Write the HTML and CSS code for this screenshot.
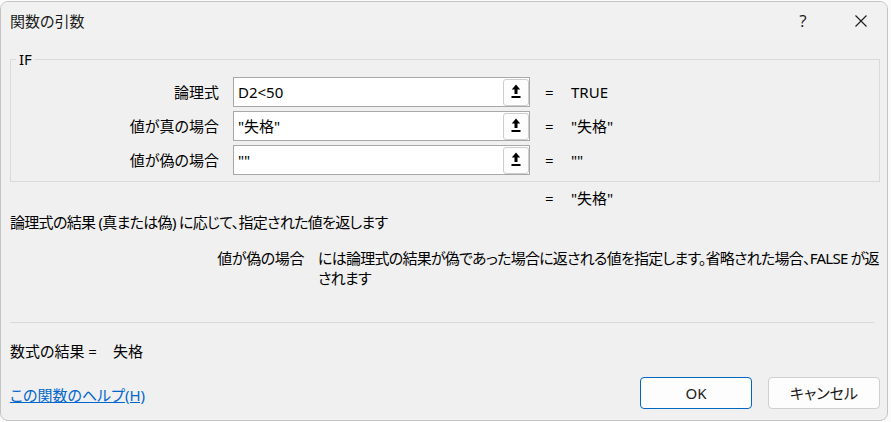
FILE: index.html
```html
<!DOCTYPE html>
<html lang="ja">
<head>
<meta charset="utf-8">
<title>関数の引数</title>
<link rel="stylesheet" href="styles.css">
</head>
<body>
<div class="dialog">
  <div class="titlebar">
    <div class="title">関数の引数</div>
    <div class="cap cap-help">?</div>
    <div class="cap cap-close">
      <svg width="12" height="12" viewBox="0 0 12 12"><path d="M0.5 0.5 L11.5 11.5 M11.5 0.5 L0.5 11.5" stroke="#1b1b1b" stroke-width="1.1" fill="none"/></svg>
    </div>
  </div>
  <div class="content">
    <fieldset class="group">
      <legend class="legend">IF</legend>
      <div class="args">
        <div class="arg-label">論理式</div>
        <div class="field"><span class="field-text">D2&lt;50</span><span class="pick"><svg width="10" height="16" viewBox="0 0 10 16"><path d="M5 0.5 L9.2 5.5 L0.8 5.5 Z" fill="#000"/><rect x="3.5" y="5" width="3" height="5" fill="#000"/><rect x="0.5" y="12" width="9" height="2" fill="#000"/></svg></span></div>
        <div class="eq">=</div>
        <div class="val">TRUE</div>

        <div class="arg-label">値が真の場合</div>
        <div class="field"><span class="field-text">"失格"</span><span class="pick"><svg width="10" height="16" viewBox="0 0 10 16"><path d="M5 0.5 L9.2 5.5 L0.8 5.5 Z" fill="#000"/><rect x="3.5" y="5" width="3" height="5" fill="#000"/><rect x="0.5" y="12" width="9" height="2" fill="#000"/></svg></span></div>
        <div class="eq">=</div>
        <div class="val">"失格"</div>

        <div class="arg-label">値が偽の場合</div>
        <div class="field"><span class="field-text">""</span><span class="pick"><svg width="10" height="16" viewBox="0 0 10 16"><path d="M5 0.5 L9.2 5.5 L0.8 5.5 Z" fill="#000"/><rect x="3.5" y="5" width="3" height="5" fill="#000"/><rect x="0.5" y="12" width="9" height="2" fill="#000"/></svg></span></div>
        <div class="eq">=</div>
        <div class="val">""</div>
      </div>
    </fieldset>

    <div class="result-row"><span class="eq-plain">=</span><span class="val">"失格"</span></div>

    <div class="summary">論理式の結果 (真または偽) に応じて、指定された値を返します</div>

    <div class="detail">
      <div class="detail-label">値が偽の場合</div>
      <div class="detail-text">には論理式の結果が偽であった場合に返される値を指定します。省略された場合、FALSE が返<br>されます</div>
    </div>

    <div class="sep"></div>

    <div class="formula">数式の結果 =<span class="formula-val">失格</span></div>

    <div class="footer">
      <a class="help-link" href="#">この関数のヘルプ(H)</a>
      <div class="buttons">
        <div class="btn btn-primary">OK</div>
        <div class="btn">キャンセル</div>
      </div>
    </div>
  </div>
</div>
</body>
</html>
```

FILE: styles.css
```css
html, body {
  margin: 0;
  padding: 0;
  background: #fbfbfb;
}

body {
  font-family: "Noto Sans", "Noto Sans CJK JP", sans-serif;
  font-size: 15px;
  font-feature-settings: "palt";
  color: #000;
  line-height: 20px;
}

.dialog {
  box-sizing: border-box;
  width: 888px;
  height: 420px;
  margin-top: 1px;
  background: #f0f0f0;
  border: 1px solid #c4c4c4;
  border-radius: 8px;
  overflow: hidden;
}

.titlebar {
  display: flex;
  align-items: center;
  height: 37px;
  background: #f1f1f1;
}

.title {
  flex: 1;
  padding-left: 9px;
  color: #1a1a1a;
}

.cap {
  display: flex;
  align-items: center;
  justify-content: center;
  height: 37px;
}

.cap-help {
  width: 64px;
  color: #1a1a1a;
  font-size: 17px;
  font-family: "Segoe UI", "Open Sans", sans-serif;
}

.cap-close {
  width: 52px;
}

.content {
  padding: 0 7px 0 9px;
}

.group {
  margin: 10px 0 0 0;
  padding: 0;
  border: 1px solid #dadada;
  min-width: 0;
}

.legend {
  margin-left: 5px;
  padding: 0 3px;
  line-height: 20px;
}

.args {
  display: grid;
  grid-template-columns: 222px 297px 41px 1fr;
  row-gap: 4px;
  padding: 8px 0 6px 0;
  align-items: center;
}

.arg-label {
  text-align: right;
  padding-right: 14px;
}

.field {
  box-sizing: border-box;
  height: 30px;
  display: flex;
  align-items: center;
  background: #fff;
  border: 1px solid #a8a8a8;
}

.field-text {
  flex: 1;
  padding-left: 4px;
}

.pick {
  box-sizing: border-box;
  width: 26px;
  height: 27px;
  border: 1px solid #cdcdcd;
  border-radius: 3px;
  background: #fdfdfd;
  display: flex;
  align-items: center;
  justify-content: center;
}

.pick svg {
  display: block;
}

.eq {
  padding-left: 15px;
}

.result-row {
  display: flex;
  margin-top: 6px;
  padding-left: 535px;
}

.eq-plain {
  width: 26px;
}

.summary {
  margin-top: 4px;
  letter-spacing: -0.7px;
}

.detail {
  display: grid;
  grid-template-columns: 294px 1fr;
  column-gap: 14px;
  margin-top: 16px;
}

.detail-label {
  text-align: right;
  letter-spacing: -0.4px;
}

.detail-text {
  letter-spacing: -0.75px;
  white-space: nowrap;
}

.sep {
  margin-top: 34px;
  height: 1px;
  background: #d9d9d9;
  margin-right: 6px;
}

.formula {
  margin-top: 18px;
}

.formula-val {
  margin-left: 16px;
}

.footer {
  display: flex;
  align-items: center;
  justify-content: space-between;
  margin-top: 16px;
}

.help-link {
  color: #0066cc;
  text-decoration: underline;
  margin-top: 3px;
}

.buttons {
  display: flex;
  gap: 16px;
}

.btn {
  box-sizing: border-box;
  width: 112px;
  height: 32px;
  display: flex;
  align-items: center;
  justify-content: center;
  background: #fdfdfd;
  border: 1px solid #d0d0d0;
  border-radius: 4px;
  color: #1a1a1a;
}

.btn-primary {
  border-color: #0067c0;
}
```
